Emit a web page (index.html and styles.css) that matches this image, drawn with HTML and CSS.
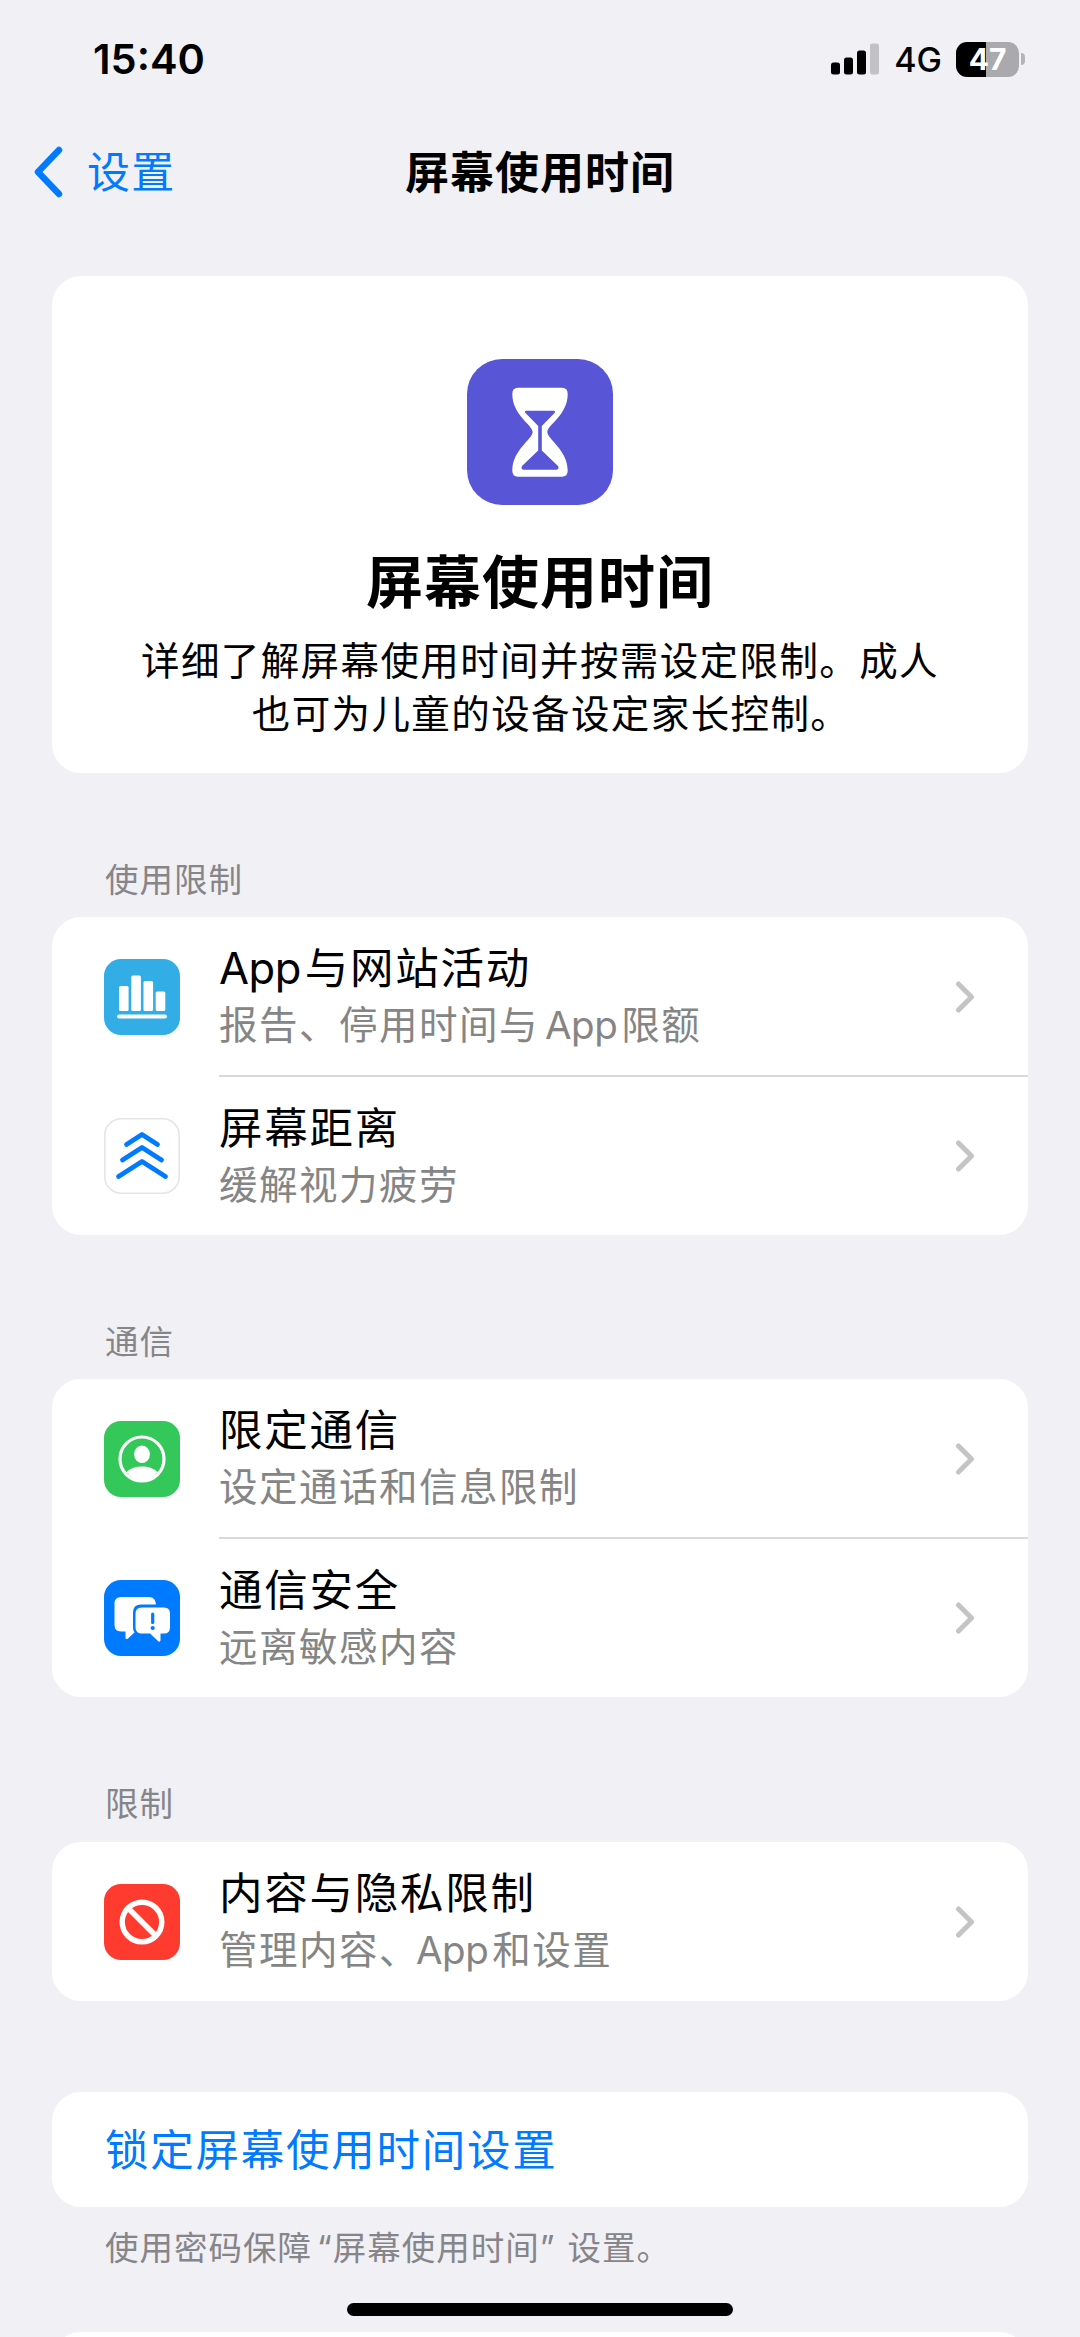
FILE: index.html
```html
<!DOCTYPE html>
<html lang="zh-CN">
<head>
<meta charset="utf-8">
<title>屏幕使用时间</title>
<link rel="stylesheet" href="styles.css">
</head>
<body>
<div class="screen">
  <header class="status">
    <span class="time">15:40</span>
    <div class="status-right">
      <svg class="signal" width="49" height="32" viewBox="0 0 49 32"><rect x="0" y="19.500" width="9" height="12" rx="2.500"/><rect x="13" y="14.500" width="9" height="17" rx="2.500"/><rect x="26" y="7.500" width="9" height="24" rx="2.500"/><rect x="39" y="0.500" width="9" height="31" rx="2.500" fill="#c1c1c6"/></svg>
      <span class="network">4G</span>
      <div class="battery"><span>47</span></div>
      <div class="nub"></div>
    </div>
  </header>
  <nav class="nav">
    <a class="back"><svg width="30" height="52" viewBox="0 0 30 52"><path d="M25 4 4 26 25 48" fill="none" stroke="#007aff" stroke-width="6.500" stroke-linecap="round" stroke-linejoin="round"/></svg><span>设置</span></a>
    <h1 class="nav-title">屏幕使用时间</h1>
  </nav>
  <main class="content">
    <section class="card hero">
      <svg class="hero-icon" width="146" height="146" viewBox="0 0 146 146"><rect width="146" height="146" rx="35" fill="#5856d6"/><path fill="#fff" d="M51 28.700H95Q100.700 28.700 100.700 35C100.700 56 80.300 66 80.300 73C80.300 80 100.700 91 100.700 111.500Q100.700 117.700 95 117.700H51Q45.300 117.700 45.300 111.500C45.300 91 65.700 80 65.700 73C65.700 66 45.300 56 45.300 35Q45.300 28.700 51 28.700Z"/><path fill="#5856d6" d="M59.500 51.700H86.500Q89 52 87.500 54L74.800 67V91.500L91 107Q92.500 110.300 89.500 110.700H56.500Q53.500 110.300 55 107L71.200 91.500V67L58.500 54Q57 52 59.500 51.700Z"/></svg>
      <h2>屏幕使用时间</h2>
      <p>详细了解屏幕使用时间并按需设定限制。成人<br><span class="second-line">也可为儿童的设备设定家长控制。</span></p>
    </section>

    <h3 class="label">使用限制</h3>
    <section class="card">
      <div class="row">
        <svg class="icon" viewBox="0 0 76 76"><rect width="76" height="76" rx="17" fill="#32ade6"/><g fill="#fff"><rect x="15" y="27" width="9.600" height="25" rx="1.500"/><rect x="27.300" y="16.500" width="9.600" height="35.500" rx="1.500"/><rect x="39.500" y="22" width="9.600" height="30" rx="1.500"/><rect x="51.700" y="32.500" width="9.600" height="19.500" rx="1.500"/><rect x="13" y="55.500" width="50" height="4" rx="2"/></g></svg>
        <div class="cell"><div class="text"><div class="title"><span class="latin">App</span>与网站活动</div><div class="sub">报告、停用时间与<span class="latin spaced">App</span>限额</div></div><svg class="chevron" viewBox="0 0 20 34"><path d="M3.500 4 16.500 17 3.500 30"/></svg></div>
      </div>
      <div class="row">
        <svg class="icon" viewBox="0 0 76 76"><rect x=".8" y=".8" width="74.400" height="74.400" rx="16.500" fill="#fff" stroke="#e5e5e7" stroke-width="1.600"/><path d="M22.500 26.500 38 16.500 53.500 26.500M18.500 42 38 29.500 57.500 42M14.500 58.500 38 43.500 61.500 58.500" fill="none" stroke="#007aff" stroke-width="4.800" stroke-linecap="round" stroke-linejoin="round"/></svg>
        <div class="cell"><div class="text"><div class="title">屏幕距离</div><div class="sub">缓解视力疲劳</div></div><svg class="chevron" viewBox="0 0 20 34"><path d="M3.500 4 16.500 17 3.500 30"/></svg></div>
      </div>
    </section>

    <h3 class="label">通信</h3>
    <section class="card">
      <div class="row">
        <svg class="icon" viewBox="0 0 76 76"><rect width="76" height="76" rx="17" fill="#34c759"/><circle cx="38" cy="38" r="22" fill="none" stroke="#fff" stroke-width="3.200"/><ellipse cx="38" cy="33.300" rx="7.900" ry="8.800" fill="#fff"/><path d="M22.500 51C30 43.700 46 43.700 53.500 51Q38 69 22.500 51Z" fill="#fff"/></svg>
        <div class="cell"><div class="text"><div class="title">限定通信</div><div class="sub">设定通话和信息限制</div></div><svg class="chevron" viewBox="0 0 20 34"><path d="M3.500 4 16.500 17 3.500 30"/></svg></div>
      </div>
      <div class="row">
        <svg class="icon" viewBox="0 0 76 76"><rect width="76" height="76" rx="17" fill="#007aff"/><path fill="#fff" d="M17 17H45Q51.500 17 52 24.500H37Q29 24.500 29 32.500V48Q29 50.500 30.500 52.500L24 58.500Q21.500 60 21.500 57.500V51.500H17Q10.500 51.500 10.500 45V23.500Q10.500 17 17 17Z"/><path fill="#fff" d="M38 27.500H60Q66 27.500 66 33.500V47.500Q66 53.500 60 53.500H56.500V60.500Q56 62.500 54 61L46 53.500H38Q31.500 53.500 31.500 47.500V33.500Q31.500 27.500 38 27.500Z"/><path d="M48.700 34V42.500" stroke="#007aff" stroke-width="3.200" stroke-linecap="round"/><circle cx="48.700" cy="48" r="2.100" fill="#007aff"/></svg>
        <div class="cell"><div class="text"><div class="title">通信安全</div><div class="sub">远离敏感内容</div></div><svg class="chevron" viewBox="0 0 20 34"><path d="M3.500 4 16.500 17 3.500 30"/></svg></div>
      </div>
    </section>

    <h3 class="label last-label">限制</h3>
    <section class="card">
      <div class="row">
        <svg class="icon" viewBox="0 0 76 76"><rect width="76" height="76" rx="17" fill="#ff3b30"/><g fill="none" stroke="#fff" stroke-width="5.400"><circle cx="38" cy="38" r="19.800"/><path d="M24 24 52 52"/></g></svg>
        <div class="cell"><div class="text"><div class="title">内容与隐私限制</div><div class="sub">管理内容、<span class="latin tight">App</span>和设置</div></div><svg class="chevron" viewBox="0 0 20 34"><path d="M3.500 4 16.500 17 3.500 30"/></svg></div>
      </div>
    </section>

    <section class="card lock"><a class="title">锁定屏幕使用时间设置</a></section>
    <p class="footnote">使用密码保障<span class="open">“</span>屏幕使用时间<span class="close">”</span>设置。</p>
    <section class="card next"></section>
  </main>
  <div class="home"></div>
</div>
</body>
</html>
```
FILE: styles.css
```css
* { box-sizing: border-box; margin: 0; padding: 0; }
body { background: #f1f0f5; font-family: Inter, "Noto Sans CJK SC", sans-serif; color: #000; }
.screen { position: relative; width: 1080px; height: 2337px; overflow: hidden; }
svg { display: block; flex: none; }

.status { height: 118px; padding: 0 55px 0 93px; display: flex; align-items: center; justify-content: space-between; }
.time { font-size: 41.500px; font-weight: 600; line-height: 50px; }
.status-right { display: flex; align-items: center; }
.network { font-size: 34px; line-height: 40px; font-weight: 500; margin: 2px 14px 0 14px; }
.battery { width: 63px; height: 35px; border-radius: 11px; background: linear-gradient(90deg, #000 30px, #a9a9ae 30px); color: #fff; font-size: 30px; font-weight: 700; line-height: 35px; text-align: center; }
.nub { width: 4px; height: 12px; margin-left: 2px; border-radius: 0 4px 4px 0; background: #b4b4b9; }

.nav { height: 158px; padding: 28px 34px 0; display: grid; grid-template-columns: 1fr auto 1fr; align-items: start; }
.back { display: flex; align-items: center; gap: 23px; height: 52px; color: #007aff; font-size: 43px; letter-spacing: 1.300px; }
.back span { line-height: 52px; padding-bottom: 1px; }
.nav-title { font-size: 44px; line-height: 54px; font-weight: 600; letter-spacing: 1px; }

.content { padding: 0 52px; display: flex; flex-direction: column; }
.card { background: #fff; border-radius: 29px; width: 976px; flex: none; }
.hero { height: 497px; padding-top: 83px; display: flex; flex-direction: column; align-items: center; text-align: center; }
.hero h2 { font-size: 57px; line-height: 70px; font-weight: 700; letter-spacing: 1px; margin-top: 43px; }
.hero p { font-size: 38.500px; line-height: 52.500px; letter-spacing: 1.400px; margin-top: 17px; white-space: nowrap; }
.second-line { padding-left: 22px; }
.label { height: 144px; padding: 83px 53px 0; color: #868589; font-size: 33.500px; line-height: 48px; font-weight: 400; letter-spacing: 1px; }
.last-label { height: 145px; }
.row { height: 159px; display: flex; align-items: center; padding-left: 52px; }
.icon { width: 76px; height: 76px; }
.cell { flex: 1; height: 159px; margin-left: 39px; padding-right: 53px; display: flex; align-items: center; justify-content: space-between; }
.row + .row .cell { height: 160px; margin-top: -1px; border-top: 2px solid #d9d9db; }
.text { padding-bottom: 1px; }
.title { font-size: 43.500px; line-height: 58px; letter-spacing: 1.750px; }
.sub { font-size: 38.500px; line-height: 56px; letter-spacing: 1.500px; color: #858585; }
.latin { letter-spacing: -0.500px; margin-right: 4px; }
.spaced { margin-left: 6px; margin-right: 4px; }
.tight { margin-left: -3px; }
.chevron { width: 20px; height: 34px; }
.chevron path { fill: none; stroke: #c4c4c6; stroke-width: 5px; stroke-linecap: round; stroke-linejoin: round; }
.lock { height: 115px; margin-top: 91px; padding: 29px 53px; color: #007aff; display: flex; align-items: center; }
.footnote { height: 125px; padding: 17px 53px 0; font-size: 33.500px; line-height: 48px; letter-spacing: 1px; color: #868589; }
.open { margin-left: 5px; }
.close { margin-right: 12px; }
.next { height: 60px; }
.home { position: absolute; left: 347px; top: 2303px; width: 386px; height: 13px; border-radius: 7px; background: #000; }
```
